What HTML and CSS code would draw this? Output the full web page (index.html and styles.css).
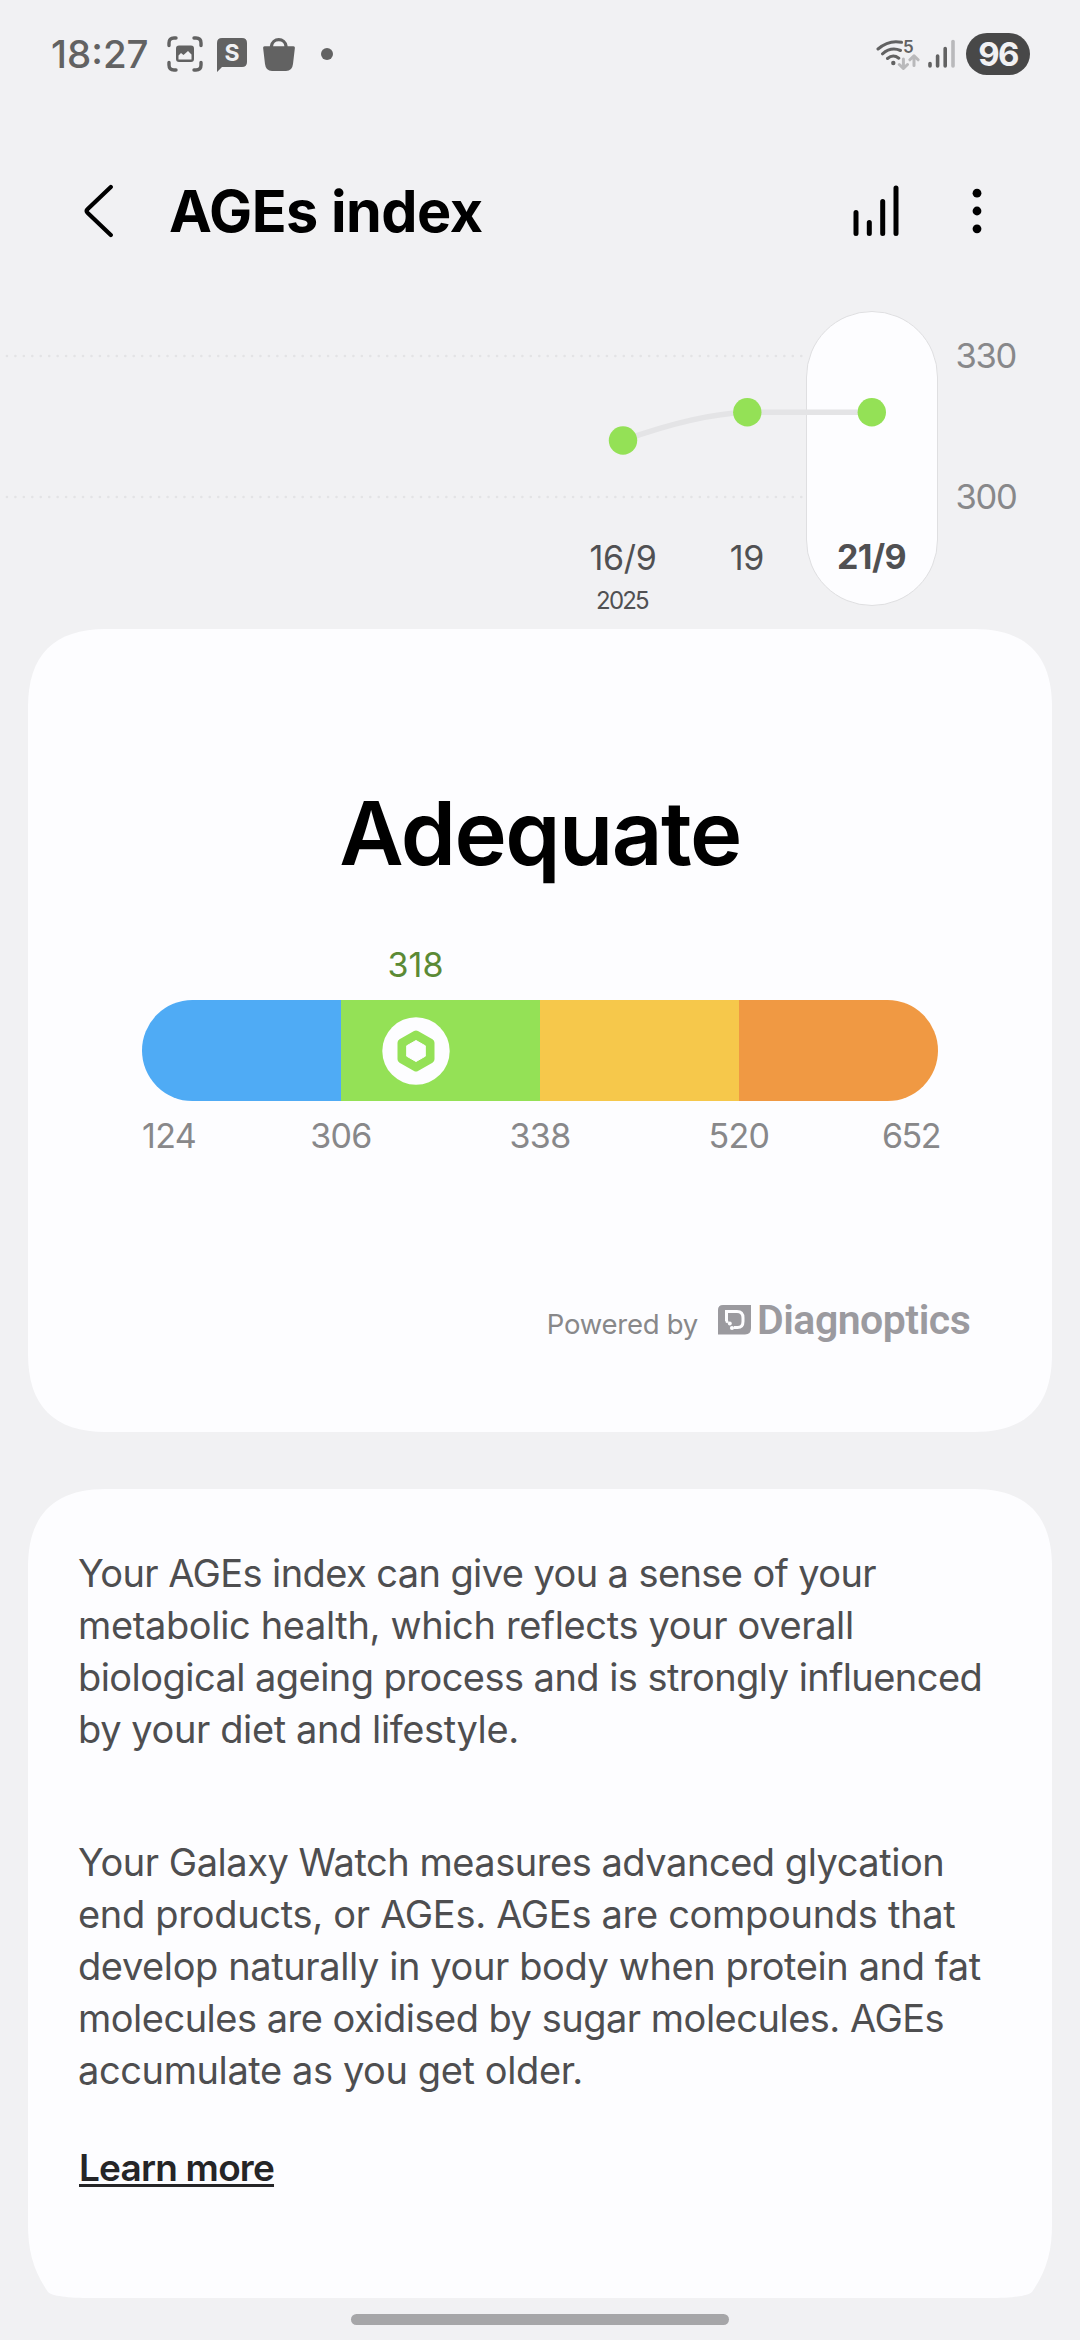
FILE: index.html
```
<!DOCTYPE html>
<html lang="en">
<head>
<meta charset="utf-8">
<title>AGEs index</title>
<link rel="stylesheet" href="styles.css">
</head>
<body>
<div class="status">
  <span class="clock">18:27</span>
  <svg class="capture" width="36" height="36" viewBox="0 0 36 36" fill="none">
    <g stroke="#626262" stroke-width="3.4" stroke-linecap="round">
      <path d="M2 9.500V7Q2 2 7 2H9M27 2H29Q34 2 34 7V9.500M34 26.500V29Q34 34 29 34H27M9 34H7Q2 34 2 29V26.500"/>
    </g>
    <rect x="9" y="9.500" width="18" height="16.500" rx="3" fill="#626262"/>
    <path d="M11.500 19.500L14 17L16.500 19L21 15L24.500 18.500V23.500H11.500Z" fill="#f1f1f3"/>
  </svg>
  <svg class="bubble" width="30" height="34" viewBox="0 0 30 34">
    <path d="M5 0H25Q30 0 30 5V24Q30 29 25 29H5L0 34V5Q0 0 5 0Z" fill="#626262"/>
    <text x="15" y="22.500" text-anchor="middle" class="bubble-text">S</text>
  </svg>
  <svg class="bag" width="32" height="34" viewBox="0 0 32 34">
    <path d="M8.500 11V9A7.300 7.300 0 0 1 23 9V11" fill="none" stroke="#626262" stroke-width="3.200"/>
    <path d="M1.500 9.300H30.500Q32 9.300 31.900 10.800L30 27Q29.200 34 23 34H9Q2.800 34 2 27L.1 10.800Q0 9.300 1.500 9.300Z" fill="#626262"/>
  </svg>
  <span class="more-dot"></span>
  <svg class="wifi" width="44" height="38" viewBox="0 -3 44 38" fill="none">
    <g stroke="#626262" stroke-width="3" stroke-linecap="round">
      <path d="M2 10Q13 .5 25.500 3.300M6.500 14.800Q15 7.500 24.500 11.500M11.500 19.500Q17 14.800 22.800 19.200"/>
    </g>
    <circle cx="17.300" cy="24" r="2.200" fill="#626262"/>
    <text x="27" y="14" class="wifi-text">5</text>
    <g stroke="#b9b9bb" stroke-width="3" stroke-linecap="round" stroke-linejoin="round">
      <path d="M27.400 20V29M23.300 25.500L27.400 29.500L31.500 25.500M38 26.500V17.500M33.900 20.800L38 16.800L42.100 20.800"/>
    </g>
  </svg>
  <svg class="signal" width="28" height="30" viewBox="0 0 28 30" stroke-width="3.600" stroke-linecap="round">
    <path d="M2 24.500V27M9.600 17V27M17.200 9.500V27" stroke="#626262"/>
    <path d="M25 2.500V27" stroke="#b9b9bb"/>
  </svg>
  <span class="battery">96</span>
</div>

<header class="header">
  <svg class="back" width="30" height="54" viewBox="0 0 30 54">
    <path d="M26.800 3L3.500 25.200Q1.800 27 3.500 28.800L26.800 51" fill="none" stroke="#000" stroke-width="4.200" stroke-linecap="round"/>
  </svg>
  <h1 class="title">AGEs index</h1>
  <svg class="bars" width="46" height="54" viewBox="0 0 46 54">
    <path d="M3 28.500V49.500M16.300 38.500V49.500M29.700 17.500V49.500M43 4V49.500" stroke="#000" stroke-width="5" stroke-linecap="round"/>
  </svg>
  <svg class="menu" width="10" height="46" viewBox="0 0 10 46">
    <circle cx="5" cy="5.200" r="4.400"/><circle cx="5" cy="23" r="4.400"/><circle cx="5" cy="40.800" r="4.400"/>
  </svg>
</header>

<svg class="chart" width="1080" height="318" viewBox="0 0 1080 318">
  <path d="M-1.500 45H804M-1.500 186H804" class="grid"/>
  <rect x="806.500" y=".5" width="131" height="294" rx="65.500" class="selected"/>
  <path d="M623 129.500Q697 103 747.300 101.300H871.800" class="trend"/>
  <g class="points">
    <circle cx="623" cy="129.500" r="14.200"/>
    <circle cx="747.300" cy="101.300" r="14.200"/>
    <circle cx="871.800" cy="101.300" r="14.200"/>
  </g>
  <g class="axis">
    <text x="955.500" y="57">330</text>
    <text x="955.500" y="198">300</text>
  </g>
  <g class="days" text-anchor="middle">
    <text x="623" y="258.700">16/9</text>
    <text x="747" y="258.700">19</text>
    <text x="871.500" y="258" class="day-on">21/9</text>
    <text x="622" y="298" class="year">2025</text>
  </g>
</svg>

<section class="card result">
  <h2 class="level">Adequate</h2>
  <div class="value-row"><span class="value" style="left:34.36%">318</span></div>
  <div class="scale">
    <i class="low"></i><i class="adequate"></i><i class="raised"></i><i class="high"></i>
    <svg class="marker" style="left:34.36%" width="68" height="68" viewBox="-34 -34 68 68">
      <circle r="33.700" fill="#fdfdff"/>
      <path d="M0-16.500L14.500-8.300V8.300L0 16.500L-14.500 8.300V-8.300Z" fill="#94e156" stroke="#94e156" stroke-width="8" stroke-linejoin="round"/>
      <path d="M0-10.500L9.300-5.200V5.200L0 10.500L-9.300 5.200V-5.200Z" fill="#fdfdff" stroke="#fdfdff" stroke-width="1" stroke-linejoin="round"/>
    </svg>
  </div>
  <div class="ticks"><span>124</span><span>306</span><span>338</span><span>520</span><span>652</span></div>
  <div class="powered">
    <span class="powered-by">Powered by</span>
    <svg class="mark" width="33" height="30" viewBox="0 0 33 30">
      <path d="M5 0H33V23Q33 29.500 27 29.500H0V5Q0 0 5 0Z" fill="#9b9a9f"/>
      <path d="M8.500 16V6.500H19Q25 6.500 25 13V16.500Q25 22.500 19.500 22.500H16" fill="none" stroke="#fdfdff" stroke-width="3"/>
      <circle cx="11.800" cy="18.600" r="2" fill="#fdfdff"/>
      <circle cx="14" cy="23" r="2.100" fill="#fdfdff"/>
      <circle cx="9" cy="16.500" r="1.500" fill="#fdfdff"/>
    </svg>
    <span class="brand">Diagnoptics</span>
  </div>
</section>

<section class="card about">
  <p class="intro">
    <span>Your AGEs index can give you a sense of your</span>
    <span>metabolic health, which reflects your overall</span>
    <span>biological ageing process and is strongly influenced</span>
    <span>by your diet and lifestyle.</span>
  </p>
  <p class="detail">
    <span>Your Galaxy Watch measures advanced glycation</span>
    <span>end products, or AGEs. AGEs are compounds that</span>
    <span>develop naturally in your body when protein and fat</span>
    <span>molecules are oxidised by sugar molecules. AGEs</span>
    <span>accumulate as you get older.</span>
  </p>
  <a class="learn">Learn more</a>
</section>
<div class="home-bar"></div>
</body>
</html>
```
FILE: styles.css
```
* { box-sizing: border-box; margin: 0; padding: 0; }
body {
  width: 1080px;
  height: 2340px;
  overflow: hidden;
  background: #f1f1f3;
  font-family: Inter, "Liberation Sans", sans-serif;
  display: flex;
  flex-direction: column;
}
svg { display: block; flex: none; }

.status { height: 108px; display: flex; align-items: center; padding: 0 50px; }
.clock { width: 116px; margin-left: 1px; font-size: 38.5px; font-weight: 500; color: #626262; white-space: nowrap; }
.bubble { margin: 2px 0 0 14px; }
.bubble-text { font: 700 23px Inter, sans-serif; fill: #f1f1f3; }
.bag { margin-left: 16px; }
.more-dot { width: 12px; height: 12px; margin-left: 26px; border-radius: 50%; background: #626262; }
.wifi { margin: 2px 0 0 auto; }
.wifi-text { font: 600 17px/1 Inter, sans-serif; fill: #626262; }
.signal { margin-left: 8px; }
.battery {
  width: 64px; height: 42px; margin-left: 10px; border-radius: 21px;
  background: #484848; color: #f1f1f3;
  font-size: 33px; font-weight: 700; line-height: 42px; text-align: center; letter-spacing: -1.800px;
}

.header { height: 203px; padding: 3px 98px 0 84px; display: flex; align-items: center; }
.title { margin-left: 55px; font-size: 57.500px; font-weight: 700; line-height: 70px; letter-spacing: -.5px; white-space: nowrap; }
.bars { margin-left: auto; }
.menu { margin-left: 73px; }

.chart { height: 318px; }
.grid { stroke: #e3e3e5; stroke-width: 2.600px; stroke-linecap: round; stroke-dasharray: 0 8.450px; }
.selected { fill: #fdfdff; stroke: #dfdfe1; }
.trend { fill: none; stroke: #e4e4e6; stroke-width: 5.600px; }
.points { fill: #94e156; }
.axis { font-size: 34.500px; fill: #88888a; letter-spacing: -1.300px; }
.days { font-size: 34px; fill: #505052; letter-spacing: -.3px; }
.day-on { font-weight: 700; letter-spacing: -.6px; }
.year { font-size: 24px; letter-spacing: -1.800px; }

.card { width: 1024px; flex: none; margin: 0 28px; background: #fdfdff; }
.result {
  height: 803px; padding: 150px 86px 0 114px;
  clip-path: path("M0 78C0 26 26 0 78 0H946C998 0 1024 26 1024 78V725C1024 777 998 803 946 803H78C26 803 0 777 0 725Z");
}
.level { width: 796px; font-size: 88.500px; font-weight: 600; line-height: 108px; text-align: center; letter-spacing: -1.500px; }
.value-row { position: relative; width: 796px; height: 40px; margin-top: 58px; }
.value { position: absolute; transform: translateX(-50%); font-size: 34px; line-height: 40px; color: #5b8a35; }
.scale { position: relative; width: 796px; height: 101px; margin-top: 15px; display: flex; }
.scale i { flex: 1; }
.low { background: #4fabf5; border-radius: 50.500px 0 0 50.500px; }
.adequate { background: #94e156; }
.raised { background: #f6c84b; }
.high { background: #f09943; border-radius: 0 50.500px 50.500px 0; }
.marker { position: absolute; top: 16.500px; transform: translateX(-50%); }
.ticks {
  width: 798px; margin-top: 15px; display: grid; grid-template-columns: 99.500px 199px 199px 199px 101.500px;
  font-size: 34px; line-height: 40px; color: #88888a; text-align: center; letter-spacing: -.7px;
}
.ticks span:first-child { text-align: left; }
.ticks span:last-child { text-align: right; letter-spacing: -1.500px; }
.powered { height: 60px; margin-top: 134px; display: flex; align-items: center; justify-content: flex-end; }
.powered-by { padding-top: 8px; font-size: 27.500px; line-height: 40px; color: #88888a; letter-spacing: -.25px; }
.mark { margin: 0 6px 0 20px; }
.brand { width: 209px; font: 600 41px/60px Roboto, sans-serif; color: #9b9a9f; letter-spacing: -.5px; white-space: nowrap; }

.about {
  height: 809px; margin-top: 57px; padding: 58px 51px 0 50px;
  font-size: 38px; line-height: 52px; color: #4e4e50;
  clip-path: path("M0 78C0 26 26 0 78 0H946C998 0 1024 26 1024 78V735C1024 762 1019 781 1004 803C1000 807 985 809 960 809H64C39 809 24 807 20 803C5 781 0 762 0 735Z");
}
.about span { display: block; white-space: nowrap; letter-spacing: -.4px; }
.intro span:nth-child(1) { letter-spacing: -.59px; }
.intro span:nth-child(2) { letter-spacing: -.36px; }
.intro span:nth-child(3) { letter-spacing: -.55px; }
.detail { margin-top: 81px; }
.detail span:nth-child(1) { letter-spacing: -.47px; }
.detail span:nth-child(2) { letter-spacing: -.3px; }
.detail span:nth-child(4) { letter-spacing: -.5px; }
.learn {
  display: block; width: max-content; margin: 46px 0 0 1px; font-size: 37px; font-weight: 600; color: #252527;
  letter-spacing: -.8px; text-decoration: underline; text-decoration-thickness: 3px; text-underline-offset: 3px; text-decoration-skip-ink: none;
}
.home-bar { flex: none; width: 378px; height: 11px; margin: 16px auto 0 351px; border-radius: 5.500px; background: #a6a6a8; }
```
